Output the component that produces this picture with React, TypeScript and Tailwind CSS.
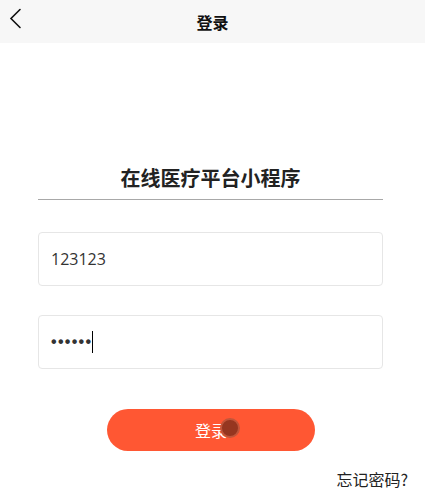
const cjk = "font-['Noto_Sans_CJK_SC','Noto_Sans',sans-serif]";

export default function App() {
    return (
        <div className={`${cjk} relative min-h-[495px] w-full bg-white text-[#222]`}>
            {/* Header */}
            <div className="relative flex h-[43px] items-center justify-center bg-[#f7f7f7]">
                <svg className="absolute left-[8px] top-[8px]" width="16" height="22" viewBox="0 0 16 22" fill="none">
                    <polyline points="12,1.5 3,10.5 12,19.5" stroke="#111" strokeWidth="1.6" strokeLinecap="round" strokeLinejoin="miter" />
                </svg>
                <h1 className="text-[16px] font-bold leading-none text-[#111]">登录</h1>
            </div>

            <main className="pl-[38px] pr-[42px] pt-[121px]">
                <div className="border-b border-[#a8a8a8] pb-[7px] text-center">
                    <h2 className="text-[20px] font-bold leading-[28px] text-[#222]">在线医疗平台小程序</h2>
                </div>

                {/* Account */}
                <div className="mt-[32px] flex h-[54px] items-center rounded-[4px] border border-[#e6e6e6] px-[12px]">
                    <span className="font-['Open_Sans',sans-serif] text-[16px] text-[#333]">123123</span>
                </div>

                {/* Password */}
                <div className="mt-[29px] flex h-[54px] items-center rounded-[4px] border border-[#e6e6e6] px-[12px]">
                    <span className="font-['Liberation_Sans',sans-serif] text-[16px] font-bold tracking-[1.3px] text-[#333]">••••••</span>
                    <span className="-ml-[0.5px] h-[22px] w-[1px] bg-black" />
                </div>
            </main>

            {/* Button */}
            <div className="relative ml-[107px] mt-[40px] flex h-[42px] w-[208px] items-center justify-center rounded-full bg-[#ff5733]">
                <span className="text-[16px] text-white">登录</span>
                <span className="absolute left-[113px] top-[9px] h-[20px] w-[20px] rounded-full border-[2px] border-[#c2553a] bg-[#963620]" />
            </div>

            <div className="mt-[16px] flex justify-end pr-[17px]">
                <span className="text-[16px] leading-[24px] text-[#222]">忘记密码?</span>
            </div>
        </div>
    );
}
